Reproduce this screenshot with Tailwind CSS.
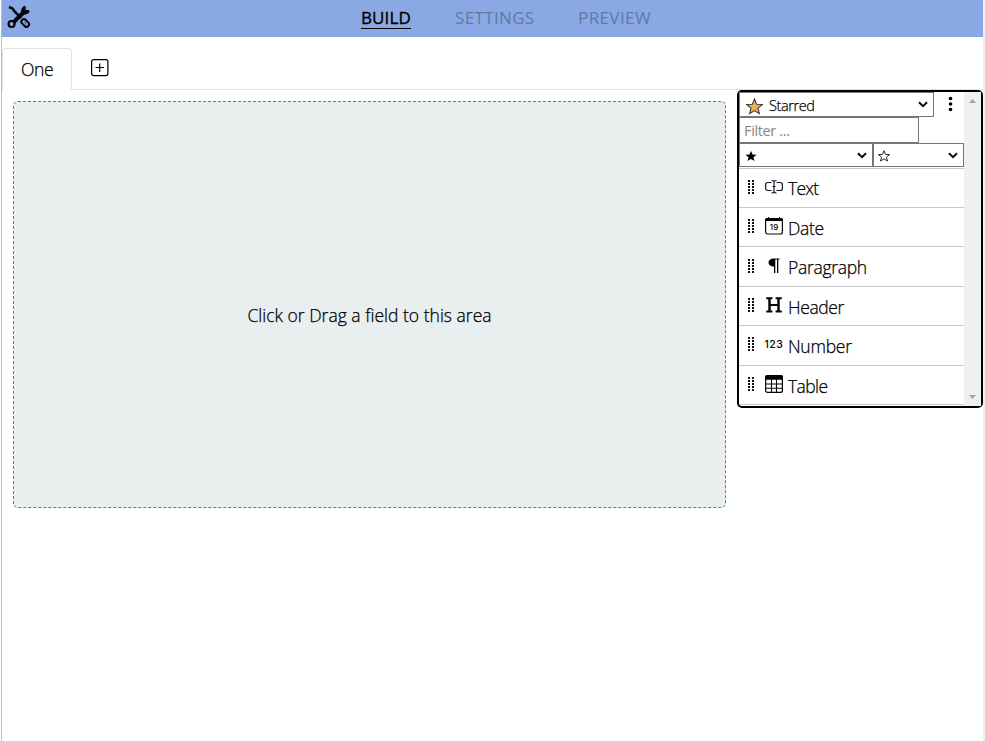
<!DOCTYPE html>
<html lang="en">
<head>
<meta charset="utf-8">
<title>Form builder</title>
<script src="https://cdn.jsdelivr.net/npm/@tailwindcss/browser@4"></script>
</head>
<body class="h-screen overflow-hidden bg-white text-[17px] text-black" style="font-family:'Open Sans','Noto Sans',sans-serif">
<svg class="hidden">
  <symbol id="grip" viewBox="0 0 6 16"><g fill="#0b0b14"><path d="M0 1h2v2H0zM4 1h2v2H4zM0 4h2v2H0zM4 4h2v2H4zM0 7h2v2H0zM4 7h2v2H4zM0 10h2v2H0zM4 10h2v2H4zM0 13h2v2H0zM4 13h2v2H4z"/></g></symbol>
  <symbol id="chev" viewBox="0 0 10 7"><path d="M1 1.2 5 5.2 9 1.2" fill="none" stroke="#080814" stroke-width="2"/></symbol>
  <symbol id="star" viewBox="0 0 24 24"><path d="M12 1.5l3 7.3 8 .5-6.100 5 2 7.700L12 17.800 5.100 22l2-7.700L1 9.300l8-.5z"/></symbol>
</svg>
<div class="flex h-full flex-col border-l border-r-2 border-l-[#bdbdbd] border-r-[#f0f0f0] ml-px">
  <header class="relative flex h-[37px] shrink-0 items-center bg-[#8aa8e4]">
    <svg class="ml-[5px] mb-[3px] size-[24px]" viewBox="0 0 24 24" fill="none" stroke="#05050c">
      <path d="M2 2 5.500 3.500 8 7 14 13" stroke-width="2.600"/>
      <path d="M6.300 17.500 18 6" stroke-width="4"/>
      <circle cx="4.600" cy="19" r="3" stroke-width="2.200"/>
      <path d="M21.800 5.800A4 4 0 0 1 15.500 7.500 4.300 4.300 0 0 1 18.200 1.800M17.800 1.500 17.500 5.800 22 6" stroke-width="2.200"/>
      <rect x="-2.500" y="-4.300" width="5" height="8.600" rx="2.300" transform="translate(18.200 18) rotate(-45)" stroke-width="2"/>
      <path d="m17 16.500 3 3" stroke="#62748c" stroke-width="1.200"/>
    </svg>
    <nav class="ml-[330px] flex items-start gap-[43px] text-[17px] leading-[20px] text-[#5e7ba5]">
      <span class="w-[50px] whitespace-nowrap border-b border-black tracking-[0.1px] text-black [-webkit-text-stroke:0.35px]">BUILD</span>
      <span class="ml-px w-[80px] whitespace-nowrap tracking-[0.35px]">SETTINGS</span>
      <span class="w-[80px] whitespace-nowrap tracking-[0.4px]">PREVIEW</span>
    </nav>
  </header>
  <div class="flex h-[53px] shrink-0 items-end">
    <div class="flex h-[42px] w-[70px] items-center rounded-t border border-b-0 border-[#dee2e6] pl-[18px] text-[17.500px] font-light tracking-[-0.4px] [-webkit-text-stroke:0.25px]">One</div>
    <div class="flex h-[42px] grow border-b border-[#dee2e6]">
      <svg class="ml-[19px] mt-[11px] size-[18px]" viewBox="0 0 18 18" fill="none" stroke="#000"><rect x=".6" y=".6" width="16.300" height="16" rx="2" stroke-width="1.200"/><path d="M4.500 8.500h8.500M8.700 4.500V13" stroke-width="1.200"/></svg>
    </div>
  </div>
  <main class="flex items-start">
    <section class="ml-[11px] mt-[11px] flex h-[407px] w-[713px] items-center justify-center rounded-[5px] border border-dashed border-[#1e90d8] bg-[#e9efef] pt-[22px]">
      <span class="whitespace-nowrap text-[17.500px] font-light tracking-[0.010px] [-webkit-text-stroke:0.25px]">Click or Drag a field to this area</span>
    </section>
    <aside class="ml-[11px] flex h-[318px] w-[246px] shrink-0 rounded-[5px] border-2 border-black">
      <div class="w-[225px]">
        <div class="flex">
          <div class="flex h-[25px] w-[195px] items-center border border-[#767676] pl-[6px] pr-[5px] text-[14.500px] leading-[24px]">
            <svg class="size-[17px] mt-[3px]" fill="#edb04d" stroke="#3c3633" stroke-width="1.500"><use href="#star"/></svg>
            <span class="ml-[6px] mt-[2px] grow font-light tracking-[-0.4px] [-webkit-text-stroke:0.25px]">Starred</span>
            <svg class="h-[7px] w-[10px]"><use href="#chev"/></svg>
          </div>
          <svg class="ml-[14px] mt-[4px] h-[16px] w-[5px]" viewBox="0 0 5 16"><circle cx="2.500" cy="2.500" r="1.800"/><circle cx="2.500" cy="8" r="1.800"/><circle cx="2.500" cy="13.500" r="1.800"/></svg>
        </div>
        <div class="h-[26px] w-[180px] border border-[#767676] pl-[4px] text-[14.500px] leading-[26px] tracking-[-0.35px] text-[#858585]">Filter ...</div>
        <div class="flex h-[24px]">
          <div class="flex w-[134px] items-center justify-between border border-[#767676] pl-[5px] pr-[5px]"><svg class="mt-px size-[12px]"><use href="#star"/></svg><svg class="h-[7px] w-[10px]"><use href="#chev"/></svg></div>
          <div class="flex w-[91px] items-center justify-between border border-[#767676] pl-[4px] pr-[5px]"><svg class="mt-px size-[12px]" fill="none" stroke="#111" stroke-width="1.800"><use href="#star"/></svg><svg class="h-[7px] w-[10px]"><use href="#chev"/></svg></div>
        </div>
        <ul class="mt-px border-t border-[#c2cbca] text-[17.500px] font-light [-webkit-text-stroke:0.25px]">
          <li class="flex h-[39px] items-center border-b border-[#c2cbca] pl-[9px]"><svg class="mb-[2px] h-[16px] w-[6px]"><use href="#grip"/></svg><svg class="mb-[2px] ml-[11px] mr-[5px] size-[18px]" viewBox="0 0 18 18" fill="none" stroke="#15152a" stroke-width="1.200"><path d="M6.500 4.500H2.800A2.200 2.200 0 0 0 .6 6.700v3.600A2.200 2.200 0 0 0 2.800 12.500h3.700M11.500 4.500h3.700a2.200 2.200 0 0 1 2.200 2.200v3.600a2.200 2.200 0 0 1-2.200 2.200h-3.700M9 3v11.500M6.500 2.500Q9 2.500 9 4 9 2.500 11.500 2.500M6.500 15Q9 15 9 13.500 9 15 11.500 15M7.500 8.500h3"/></svg><span class="tracking-[-0.75px]">Text</span></li>
          <li class="flex h-[39px] items-center border-b border-[#c2cbca] pl-[9px]"><svg class="mb-[2px] h-[16px] w-[6px]"><use href="#grip"/></svg><svg class="mb-[2px] ml-[11px] mr-[5px] size-[18px]" viewBox="0 0 18 18"><rect x=".6" y="1.600" width="16.800" height="15.400" rx="2" fill="none" stroke="#080808" stroke-width="1.200"/><path d="M0 4V2.500Q0 1 2 1h1V0h1v1h10V0h1v1h1q2 0 2 1.500V4z"/><text x="9" y="12.600" text-anchor="middle" font-size="8" font-weight="500" font-family="Inter">19</text></svg><span class="mt-[3px] tracking-[-0.35px]">Date</span></li>
          <li class="flex h-[40px] items-center border-b border-[#c2cbca] pl-[9px]"><svg class="mb-[2px] h-[16px] w-[6px]"><use href="#grip"/></svg><svg class="mb-[2px] ml-[11px] mr-[5px] size-[18px]" viewBox="0 0 18 18"><path d="M8.500 1.500H14.500V2.600H13.300V16H12V2.600H10.300V16H9V9.500H8.300C5.500 9.500 3.500 7.700 3.500 5.500S5.500 1.500 8.500 1.500z"/></svg><span class="mt-[2px] tracking-[-0.3px]">Paragraph</span></li>
          <li class="flex h-[39px] items-center border-b border-[#c2cbca] pl-[9px]"><svg class="mb-[2px] h-[16px] w-[6px]"><use href="#grip"/></svg><svg class="mb-[2px] ml-[11px] mr-[5px] size-[18px]" viewBox="0 0 18 18" fill="none" stroke="#080808"><path d="M4.500 1.800v14M13.500 1.800v14" stroke-width="2.500"/><path d="M1.200 2.200h6.200M10.600 2.200h6.200M1.200 15.500h6.200M10.600 15.500h6.200M4 9h10" stroke-width="2"/></svg><span class="mt-[3px] tracking-[-0.4px]">Header</span></li>
          <li class="flex h-[40px] items-center border-b border-[#c2cbca] pl-[9px]"><svg class="mb-[4px] h-[16px] w-[6px]"><use href="#grip"/></svg><svg class="mb-[4px] ml-[11px] mr-[5px] size-[18px] overflow-visible" viewBox="0 0 18 18"><text x="-.5" y="12.500" font-size="10.500" font-weight="500" letter-spacing=".4" font-family="Inter">123</text></svg><span class="mt-[2px] tracking-[-0.25px]">Number</span></li>
          <li class="flex h-[39px] items-center border-b border-[#c2cbca] pl-[9px]"><svg class="mb-[2px] h-[16px] w-[6px]"><use href="#grip"/></svg><svg class="mb-[2px] ml-[11px] mr-[5px] size-[18px]" viewBox="0 0 18 18"><rect x=".6" y=".6" width="16.800" height="16.800" rx="2" fill="none" stroke="#080808" stroke-width="1.200"/><path d="M0 4.800V2Q0 0 2 0h14q2 0 2 2v2.800z"/><path d="M6.500 4v13.500M11.500 4v13.500M.5 9h17M.5 13.200h17" stroke="#080808" stroke-width="1.100"/></svg><span class="mt-[3px] tracking-[-0.6px]">Table</span></li>
        </ul>
      </div>
      <div class="flex grow flex-col items-center justify-between bg-[#f0f0f0] pb-[7px] pt-[7px]">
        <svg class="h-[4px] w-[7px]" viewBox="0 0 7 4"><path d="M0 4 3.500 0 7 4z" fill="#a3a3a3"/></svg>
        <svg class="h-[4px] w-[7px]" viewBox="0 0 7 4"><path d="M0 0 3.500 4 7 0z" fill="#a3a3a3"/></svg>
      </div>
    </aside>
  </main>
</div>
</body>
</html>
